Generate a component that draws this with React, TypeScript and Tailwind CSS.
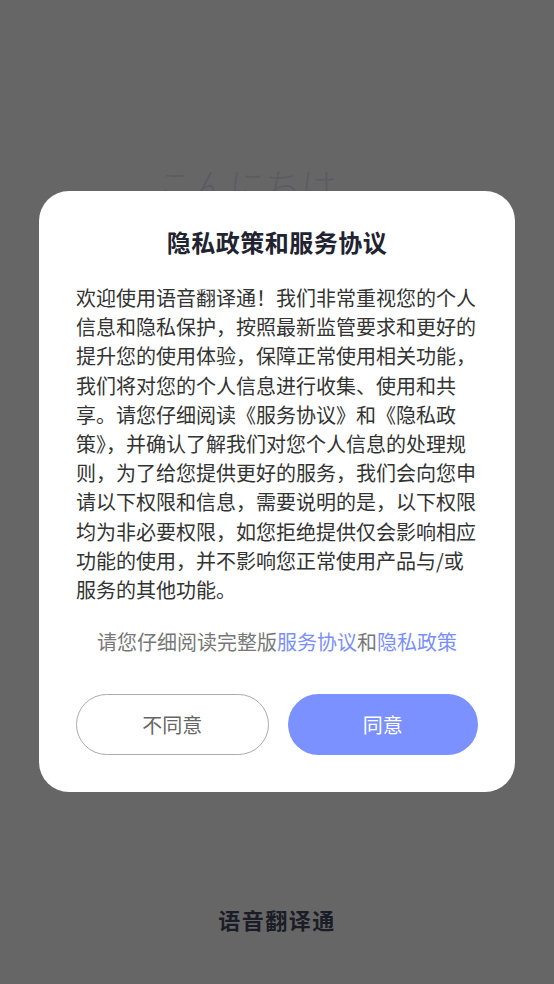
import React from "react";

const font = { fontFamily: '"Noto Sans CJK SC", "Noto Sans", sans-serif' };

export default function App() {
  return (
    <div
      className="relative w-full h-[984px] bg-[#666666] overflow-hidden flex flex-col"
      style={font}
    >
      <div className="pt-[160px] pl-[157px] text-[36px] leading-[48px] font-light text-[#5b5b64]">
        <span style={{ fontFamily: '"Noto Sans CJK JP", sans-serif' }}>こんにちは</span>
      </div>
      <div className="mt-auto pb-[50px] flex justify-center">
        <span className="text-[22px] leading-[30px] font-bold tracking-[1.5px] text-[#1a1d26]">
          语音翻译通
        </span>
      </div>

      <div className="absolute left-[39px] top-[191px] w-[476px] h-[601px] bg-white rounded-[30px] flex flex-col pt-[35px] px-[37px]">
        <h1 className="text-center text-[24px] leading-[32px] font-semibold tracking-[0.5px] text-[#222330]">
          隐私政策和服务协议
        </h1>
        <p className="mt-[25px] text-[20px] leading-[29.2px] text-[#333333] break-all">
          欢迎使用语音翻译通！我们非常重视您的个人信息和隐私保护，按照最新监管要求和更好的提升您的使用体验，保障正常使用相关功能，我们将对您的个人信息进行收集、使用和共享。请您仔细阅读《服务协议》和《隐私政策》，并确认了解我们对您个人信息的处理规则，为了给您提供更好的服务，我们会向您申请以下权限和信息，需要说明的是，以下权限均为非必要权限，如您拒绝提供仅会影响相应功能的使用，并不影响您正常使用产品与/或服务的其他功能。
        </p>
        <p className="mt-[23px] text-center text-[20px] leading-[29px] text-[#777777]">
          请您仔细阅读完整版<span className="text-[#7b8ffc]">服务协议</span>和
          <span className="text-[#7b8ffc]">隐私政策</span>
        </p>
        <div className="mt-[38px] flex gap-[19px]">
          <button className="flex-1 h-[61px] rounded-full border-[1.5px] border-[#a9abb0] bg-white text-[20px] text-[#666666]">
            不同意
          </button>
          <button className="flex-1 h-[61px] rounded-full bg-[#7b91ff] text-[20px] text-white">
            同意
          </button>
        </div>
      </div>
    </div>
  );
}
